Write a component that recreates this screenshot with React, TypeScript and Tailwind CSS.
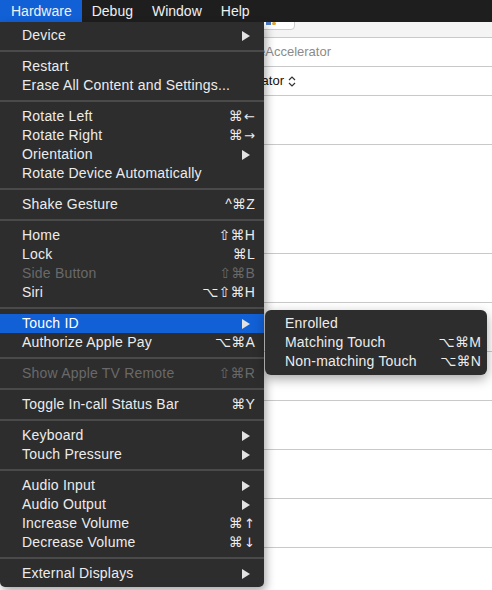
import React from 'react';
import clsx from 'clsx';

type MenuEntry =
  | { sep: true }
  | { label: string; shortcut?: string; sub?: boolean; disabled?: boolean; active?: boolean; sep?: false };

const hardwareMenu: MenuEntry[] = [
  { label: 'Device', sub: true },
  { sep: true },
  { label: 'Restart' },
  { label: 'Erase All Content and Settings...' },
  { sep: true },
  { label: 'Rotate Left', shortcut: '⌘←' },
  { label: 'Rotate Right', shortcut: '⌘→' },
  { label: 'Orientation', sub: true },
  { label: 'Rotate Device Automatically' },
  { sep: true },
  { label: 'Shake Gesture', shortcut: '^⌘Z' },
  { sep: true },
  { label: 'Home', shortcut: '⇧⌘H' },
  { label: 'Lock', shortcut: '⌘L' },
  { label: 'Side Button', shortcut: '⇧⌘B', disabled: true },
  { label: 'Siri', shortcut: '⌥⇧⌘H' },
  { sep: true },
  { label: 'Touch ID', sub: true, active: true },
  { label: 'Authorize Apple Pay', shortcut: '⌥⌘A' },
  { sep: true },
  { label: 'Show Apple TV Remote', shortcut: '⇧⌘R', disabled: true },
  { sep: true },
  { label: 'Toggle In-call Status Bar', shortcut: '⌘Y' },
  { sep: true },
  { label: 'Keyboard', sub: true },
  { label: 'Touch Pressure', sub: true },
  { sep: true },
  { label: 'Audio Input', sub: true },
  { label: 'Audio Output', sub: true },
  { label: 'Increase Volume', shortcut: '⌘↑' },
  { label: 'Decrease Volume', shortcut: '⌘↓' },
  { sep: true },
  { label: 'External Displays', sub: true },
];

const touchIdMenu = [
  { label: 'Enrolled' },
  { label: 'Matching Touch', shortcut: '⌥⌘M' },
  { label: 'Non-matching Touch', shortcut: '⌥⌘N' },
];

// arrows render small in Liberation Sans, so take them from DejaVu
const Shortcut = ({ keys }: { keys: string }) => {
  const arrow = /[←→↑↓]$/.test(keys);
  if (!arrow) return <span>{keys}</span>;
  return (
    <span className="flex items-center">
      {keys.slice(0, -1)}
      <span className="ml-[1px] font-['DejaVu_Sans',sans-serif] text-[13px]">{keys.slice(-1)}</span>
    </span>
  );
};

const Triangle = () => (
  <svg width="8" height="10" viewBox="0 0 8 10" className="mr-[5px]">
    <path d="M0 0 L8 5 L0 10 Z" fill="#e2e2e2" />
  </svg>
);

const Chevrons = () => (
  <svg width="8" height="11" viewBox="0 0 8 11" className="ml-[4px]">
    <path d="M1 4 L4 1 L7 4 M1 7 L4 10 L7 7" fill="none" stroke="#333" strokeWidth="1.2" />
  </svg>
);

const App: React.FC = () => {
  return (
    <div className="relative w-[492px] h-[590px] overflow-hidden bg-white text-[14px] font-['Liberation_Sans','DejaVu_Sans',sans-serif]">
      {/* Menu bar */}
      <div className="flex h-[22px] items-center bg-[#1e1e1e] text-[#f0f0f0]">
        <div className="flex h-full items-center bg-[#1160d5] pl-[11px] pr-[10px]">Hardware</div>
        <div className="px-[9px] ml-[1px]">Debug</div>
        <div className="px-[10px]">Window</div>
        <div className="px-[9px]">Help</div>
      </div>

      {/* Window behind the menu */}
      <div className="flex h-[16px] items-start overflow-hidden border-b border-[#c9c9c9] bg-[#f4f4f4]">
        <div className="ml-[200px] -mt-[6px] flex h-[14px] w-[95px] shrink-0 items-end justify-end rounded-[4px] border border-[#cdcdcd] bg-white pb-[4px] pr-[18px]">
          <div className="h-[3px] w-[5px] bg-[#4a78c8]" />
          <div className="ml-[1px] h-[3px] w-[4px] rounded-full bg-[#e0a530]" />
        </div>
      </div>
      <div className="flex h-[29px] items-center border-b border-[#c9c9c9]">
        <div className="w-[331px] whitespace-nowrap text-right text-[13px] text-[#8b8b8b]">eAccelerator</div>
      </div>
      <div className="flex h-[29px] items-center border-b border-[#c9c9c9]">
        <div className="flex w-[296px] items-center justify-end whitespace-nowrap text-[13px] text-[#111]">
          <span>ator</span>
          <Chevrons />
        </div>
      </div>
      <div className="h-[49px] border-b border-[#c9c9c9]" />
      <div className="h-[109px] border-b border-[#c9c9c9]" />
      <div className="h-[49px] border-b border-[#c9c9c9]" />
      <div className="h-[49px] border-b border-[#c9c9c9]" />
      <div className="h-[49px] border-b border-[#c9c9c9]" />
      <div className="h-[49px] border-b border-[#c9c9c9]" />
      <div className="h-[49px] border-b border-[#c9c9c9]" />
      <div className="h-[49px] border-b border-[#c9c9c9]" />

      {/* Hardware menu */}
      <div className="absolute left-0 top-[22px] w-[264px] rounded-b-[5px] bg-[#2d2d2d] pt-[4px] pb-[4px] tracking-[0.2px] text-[#ececec] shadow-[2px_4px_10px_rgba(0,0,0,0.35)]">
        {hardwareMenu.map((e, i) =>
          e.sep ? (
            <div key={i} className="my-[5px] h-[2px] bg-[#4a4a4a]" />
          ) : (
            <div
              key={i}
              className={clsx(
                'flex h-[19px] items-center pl-[22px] pr-[9px] whitespace-nowrap',
                e.active && 'bg-[#1160d5] text-white',
                e.disabled && 'text-[#696969]'
              )}
            >
              <span className="flex-1">{e.label}</span>
              {e.shortcut && <Shortcut keys={e.shortcut} />}
              {e.sub && <Triangle />}
            </div>
          )
        )}
      </div>

      {/* Touch ID submenu */}
      <div className="absolute left-[265px] top-[310px] w-[222px] rounded-[6px] bg-[#2d2d2d] py-[4px] tracking-[0.2px] text-[#ececec] shadow-[0_4px_12px_rgba(0,0,0,0.35)]">
        {touchIdMenu.map((e) => (
          <div key={e.label} className="flex h-[19px] items-center pl-[20px] pr-[6px] whitespace-nowrap">
            <span className="flex-1">{e.label}</span>
            {e.shortcut && <span>{e.shortcut}</span>}
          </div>
        ))}
      </div>
    </div>
  );
};

export default App;
